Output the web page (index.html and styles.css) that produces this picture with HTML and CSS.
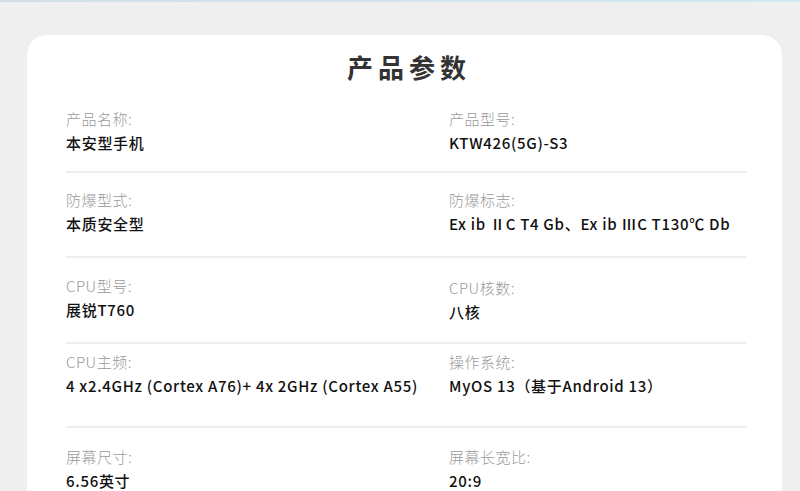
FILE: index.html
```html
<!DOCTYPE html>
<html lang="zh-CN">
<head>
<meta charset="utf-8">
<title>产品参数</title>
<link rel="stylesheet" href="styles.css">
</head>
<body>
<div class="topbar"></div>
<main class="card">
  <h1 class="title">产品参数</h1>
  <section class="specs">
    <div class="row r1">
      <div class="cell"><div class="label">产品名称:</div><div class="value">本安型手机</div></div>
      <div class="cell"><div class="label">产品型号:</div><div class="value">KTW426(5G)-S3</div></div>
    </div>
    <div class="row r2">
      <div class="cell"><div class="label">防爆型式:</div><div class="value">本质安全型</div></div>
      <div class="cell"><div class="label">防爆标志:</div><div class="value">Ex ib ⅡC T4 Gb、Ex ib ⅢC T130℃ Db</div></div>
    </div>
    <div class="row r3">
      <div class="cell"><div class="label">CPU型号:</div><div class="value">展锐T760</div></div>
      <div class="cell shift"><div class="label">CPU核数:</div><div class="value">八核</div></div>
    </div>
    <div class="row r4">
      <div class="cell"><div class="label">CPU主频:</div><div class="value">4 x2.4GHz (Cortex A76)+ 4x 2GHz (Cortex A55)</div></div>
      <div class="cell"><div class="label">操作系统:</div><div class="value">MyOS 13（基于Android 13）</div></div>
    </div>
    <div class="row r5">
      <div class="cell"><div class="label">屏幕尺寸:</div><div class="value">6.56英寸</div></div>
      <div class="cell"><div class="label">屏幕长宽比:</div><div class="value">20:9</div></div>
    </div>
  </section>
</main>
</body>
</html>
```

FILE: styles.css
```css
html, body {
  margin: 0;
  padding: 0;
}
body {
  background: #efefef;
  font-family: "Noto Sans CJK SC", "Noto Sans", sans-serif;
  overflow: hidden;
  height: 491px;
}
.topbar {
  height: 2px;
  background: linear-gradient(90deg, #d4dde4 0%, #d3e4ec 50%, #cfeaf2 100%);
}
.card {
  margin: 33px 0 0 27px;
  width: 755px;
  background: #fff;
  border-radius: 20px 20px 0 0;
  padding: 14px 35px 0 39px;
  box-sizing: border-box;
}
.title {
  margin: 0 0 6px 0;
  text-align: center;
  font-size: 26px;
  line-height: 36px;
  font-weight: 700;
  letter-spacing: 5px;
  color: #333;
  padding-left: 5px;
}
.row {
  display: grid;
  grid-template-columns: 383px 1fr;
  border-bottom: 2px solid #eeeeee;
}
.row:last-child { border-bottom: none; }
.r1 { padding: 16px 0 16px; }
.r2 { padding: 15px 0 20px; }
.r3 { padding: 16px 0 18px; }
.r4 { padding: 6px 0 28px; }
.r5 { padding: 17px 0 0; }
.shift { padding-top: 2px; }
.label {
  font-size: 15px;
  line-height: 24px;
  color: #9a9a9a;
  font-weight: 300;
  letter-spacing: 0.5px;
}
.value {
  font-size: 15px;
  line-height: 24px;
  color: #111;
  font-weight: 500;
  letter-spacing: 0.7px;
  white-space: nowrap;
}
```
